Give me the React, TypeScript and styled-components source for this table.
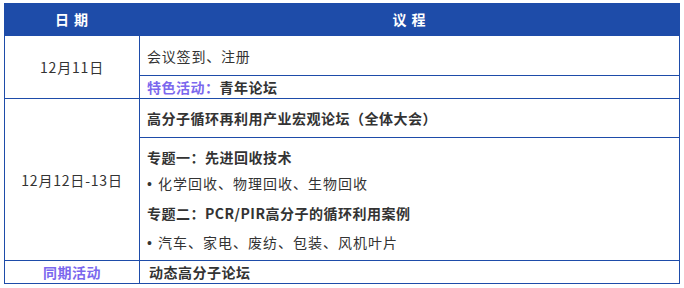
import React from "react";
import styled, { createGlobalStyle } from "styled-components";

const GlobalStyle = createGlobalStyle`
  html, body {
    margin: 0;
    padding: 0;
    background: #ffffff;
  }
  body {
    font-family: "Noto Sans CJK SC", "Noto Sans", sans-serif;
    color: #333333;
  }
`;

const BLUE = "#1e4ca9";
const PURPLE = "#7b68ee";

const Page = styled.div`
  padding: 3px 4px;
`;

const Schedule = styled.div`
  width: 676px;
  display: grid;
  grid-template-columns: 134px 539px;
  grid-template-rows: 32px 39px 22px 38px 122px 22px;
  gap: 1px;
  padding: 0 1px 1px 1px;
  background: ${BLUE};
  box-sizing: border-box;
`;

const HeadCell = styled.div`
  display: flex;
  align-items: center;
  justify-content: center;
  color: #ffffff;
  font-weight: 700;
  font-size: 14px;
  letter-spacing: 1px;
  white-space: pre;
`;

const DateCell = styled.div<{ $span: number }>`
  grid-row: span ${(p) => p.$span};
  background: #ffffff;
  display: flex;
  align-items: center;
  justify-content: center;
  font-size: 14px;
  letter-spacing: 0.8px;
  color: #333333;
`;

const LabelCell = styled.div`
  background: #ffffff;
  display: flex;
  align-items: center;
  justify-content: center;
  font-size: 14px;
  font-weight: 700;
  letter-spacing: 0.5px;
  color: ${PURPLE};
`;

const ItemCell = styled.div<{ $bold?: boolean; $inset?: number }>`
  background: #ffffff;
  display: flex;
  align-items: center;
  padding-left: ${(p) => p.$inset ?? 7}px;
  font-size: 14px;
  letter-spacing: ${(p) => (p.$bold ? 0.5 : 0.8)}px;
  font-weight: ${(p) => (p.$bold ? 700 : 400)};
  color: #333333;
  white-space: nowrap;
`;

const Accent = styled.span`
  color: ${PURPLE};
`;

const TopicCell = styled.div`
  background: #ffffff;
  display: flex;
  flex-direction: column;
  padding: 7px 0 0 7px;
  box-sizing: border-box;
`;

const TopicLine = styled.div<{ $bold?: boolean; $top: number }>`
  height: 24px;
  line-height: 24px;
  margin-top: ${(p) => p.$top}px;
  font-size: 14px;
  letter-spacing: ${(p) => (p.$bold ? 0.5 : 1)}px;
  font-weight: ${(p) => (p.$bold ? 700 : 400)};
  color: #333333;
  white-space: nowrap;
`;

const Bullet = styled.span`
  font-family: "Liberation Sans", Arial, sans-serif;
  letter-spacing: 0;
  margin-right: 6px;
`;

export default function App() {
  return (
    <>
      <GlobalStyle />
      <Page>
        <Schedule>
          <HeadCell>{"日 期"}</HeadCell>
          <HeadCell>{"议 程"}</HeadCell>

          <DateCell $span={2}>12月11日</DateCell>
          <ItemCell>会议签到、注册</ItemCell>
          <ItemCell $bold>
            <Accent>特色活动：</Accent>青年论坛
          </ItemCell>

          <DateCell $span={2}>12月12日-13日</DateCell>
          <ItemCell $bold>高分子循环再利用产业宏观论坛（全体大会）</ItemCell>
          <TopicCell>
            <TopicLine $bold $top={0}>专题一：先进回收技术</TopicLine>
            <TopicLine $top={2}>
              <Bullet>•</Bullet>化学回收、物理回收、生物回收
            </TopicLine>
            <TopicLine $bold $top={6}>专题二：PCR/PIR高分子的循环利用案例</TopicLine>
            <TopicLine $top={5}>
              <Bullet>•</Bullet>汽车、家电、废纺、包装、风机叶片
            </TopicLine>
          </TopicCell>

          <LabelCell>同期活动</LabelCell>
          <ItemCell $bold $inset={9}>动态高分子论坛</ItemCell>
        </Schedule>
      </Page>
    </>
  );
}
